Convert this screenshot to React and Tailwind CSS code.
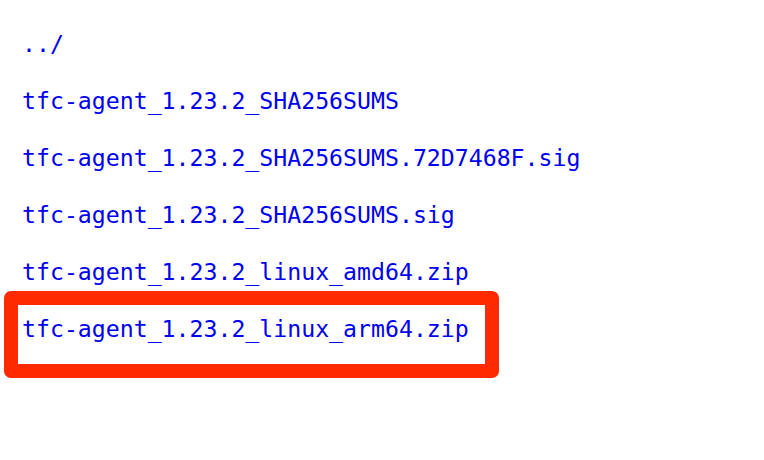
const files = [
  '../',
  'tfc-agent_1.23.2_SHA256SUMS',
  'tfc-agent_1.23.2_SHA256SUMS.72D7468F.sig',
  'tfc-agent_1.23.2_SHA256SUMS.sig',
  'tfc-agent_1.23.2_linux_amd64.zip',
  'tfc-agent_1.23.2_linux_arm64.zip'
]

export default function App() {
  return (
    <div className="relative w-[764px] h-[460px] bg-white overflow-hidden">
      <ul className="pt-[15px] pl-[22px] font-['DejaVu_Sans_Mono',monospace] text-[23.2px] text-[#0000ee]">
        {files.map((name) => (
          <li key={name} className="h-[57px] leading-[57px]">
            <a href="#" className="no-underline">{name}</a>
          </li>
        ))}
      </ul>

      {/* highlight */}
      <div className="absolute left-[4px] top-[291px] w-[495px] h-[87px] border-[14px] border-[#ff2a00] rounded-[7px]" />
    </div>
  )
}
